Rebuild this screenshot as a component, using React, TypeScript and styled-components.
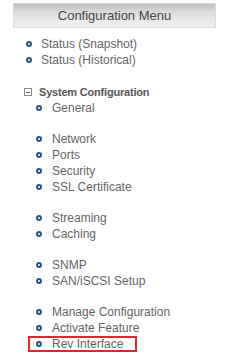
import styled, { createGlobalStyle } from "styled-components";

const GlobalStyle = createGlobalStyle`
  body {
    margin: 0;
    background: #ffffff;
    font-family: "Liberation Sans", Arial, sans-serif;
  }
`;

const Container = styled.div`
  width: 247px;
  height: 362px;
  padding-top: 3px;
  box-sizing: border-box;
  background: white;
`;

const Header = styled.div`
  margin-left: 13px;
  width: 203px;
  height: 25px;
  box-sizing: border-box;
  border: 1px solid #dcdcdc;
  background: linear-gradient(to bottom, #bcbcbc 0%, #dcdcdc 35%, #e9e9e9 70%, #efefef 100%);
  display: flex;
  align-items: center;
  justify-content: center;
  font-size: 13px;
  color: #454545;
`;

const Menu = styled.ul`
  list-style: none;
  margin: 8px 0 0 0;
  padding: 0;
`;

const Group = styled.ul`
  list-style: none;
  margin: 0;
  padding: 0;
  & + & {
    margin-top: 15px;
  }
`;

const Item = styled.li<{ $sub?: boolean; $highlighted?: boolean }>`
  display: flex;
  align-items: center;
  gap: ${(p) => (p.$sub ? "10px" : "9px")};
  width: ${(p) => (p.$highlighted ? "109px" : "auto")};
  height: 16px;
  box-sizing: border-box;
  margin-left: ${(p) => (p.$sub ? "28px" : "26px")};
  padding-left: ${(p) => (p.$sub ? "8px" : "0")};
  font-size: 12px;
  color: #656565;
  white-space: nowrap;
  outline: ${(p) => (p.$highlighted ? "2px solid #e2242b" : "none")};
  outline-offset: -2px;
`;

const Bullet = styled.span`
  width: 6px;
  height: 6px;
  box-sizing: border-box;
  border: 2px solid #2c5482;
  border-radius: 50%;
  flex-shrink: 0;
`;

const Section = styled.li`
  margin-top: 16px;
`;

const SectionTitle = styled.div`
  display: flex;
  align-items: center;
  gap: 7px;
  height: 16px;
  margin-left: 24px;
  font-size: 11px;
  font-weight: bold;
  color: #575757;
  letter-spacing: -0.2px;
`;

const Toggle = styled.span`
  position: relative;
  width: 8px;
  height: 8px;
  box-sizing: border-box;
  border: 1px solid #8a8a8a;
  flex-shrink: 0;
  &::after {
    content: "";
    position: absolute;
    left: 1px;
    right: 1px;
    top: 2.5px;
    height: 1px;
    background: #555;
  }
`;

const topItems = ["Status (Snapshot)", "Status (Historical)"];

const groups = [
  ["General"],
  ["Network", "Ports", "Security", "SSL Certificate"],
  ["Streaming", "Caching"],
  ["SNMP", "SAN/iSCSI Setup"],
  ["Manage Configuration", "Activate Feature", "Rev Interface"],
];

function App() {
  return (
    <Container>
      <GlobalStyle />
      <Header>Configuration Menu</Header>
      <Menu>
        {topItems.map((label) => (
          <Item key={label}>
            <Bullet />
            {label}
          </Item>
        ))}
        <Section>
          <SectionTitle>
            <Toggle />
            System Configuration
          </SectionTitle>
          {groups.map((group, i) => (
            <Group key={i}>
              {group.map((label) => (
                <Item key={label} $sub $highlighted={label === "Rev Interface"}>
                  <Bullet />
                  {label}
                </Item>
              ))}
            </Group>
          ))}
        </Section>
      </Menu>
    </Container>
  );
}

export default App;
